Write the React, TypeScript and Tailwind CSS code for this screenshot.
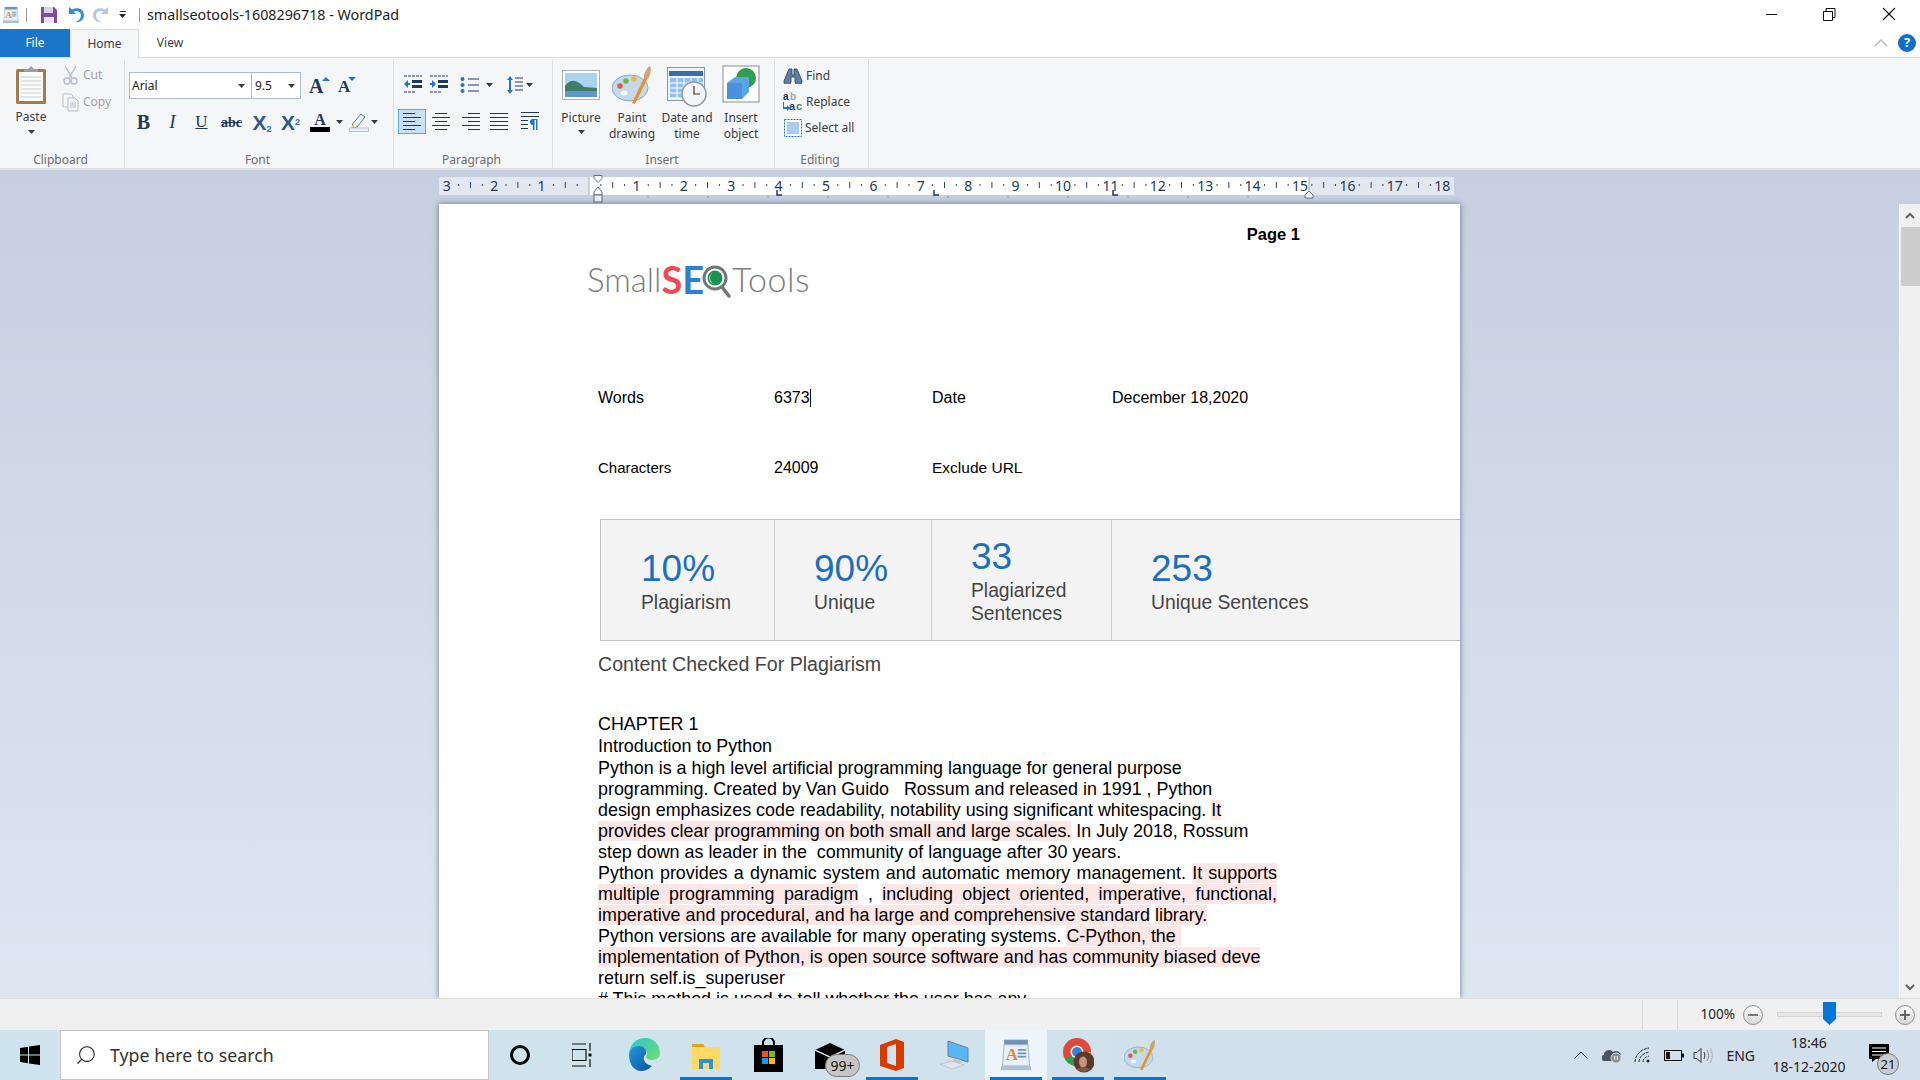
import React from 'react';
import { Search } from 'lucide-react';

const UI = "font-['Noto_Sans',sans-serif]";
const DOC = "font-['Liberation_Sans',Arial,sans-serif]";

const Arrow = ({ color = '#3b3b3b' }: { color?: string }) => (
  <svg width="7" height="4" viewBox="0 0 7 4" className="shrink-0"><path d="M0 0h7L3.5 4z" fill={color} /></svg>
);

const WordPadIcon = ({ size = 20 }: { size?: number }) => (
  <svg width={size} height={size} viewBox="0 0 20 20">
    <path d="M3 1h14v3H3z" fill="#6f94b8" />
    <path d="M3 4h14l1 13H2z" fill="#e8f1f9" stroke="#9db7d0" strokeWidth=".6" />
    <path d="M1.5 16h17l.5 3H1z" fill="#a9c2da" />
    <text x="4" y="13" fontSize="10" fontWeight="700" fill="#e8842c" fontFamily="Liberation Serif">A</text>
    <path d="M11 7h5M11 9h5M11 11h5" stroke="#6f94b8" strokeWidth="1" />
  </svg>
);

const PaintIcon = ({ size = 40 }: { size?: number }) => (
  <svg width={size} height={size} viewBox="0 0 40 40">
    <ellipse cx="18" cy="23" rx="18" ry="13" fill="#c3d9ec" stroke="#8aa9c6" strokeWidth="1" />
    <ellipse cx="12" cy="28" rx="3.5" ry="2.5" fill="#f4f8fc" />
    <circle cx="8" cy="21" r="2.8" fill="#e0594a" />
    <circle cx="14" cy="16" r="2.8" fill="#6fb54a" />
    <circle cx="22" cy="14" r="2.8" fill="#f0b93a" />
    <path d="M20 38 33 11l3 1.5L23 39z" fill="#e8902c" />
    <path d="M32 12c0-5 3-9 6-11 2 3 0 10-2 13z" fill="#c9a77c" />
  </svg>
);

const ChromeIcon = () => (
  <svg width="32" height="36" viewBox="0 0 32 36">
    <circle cx="15" cy="15" r="14" fill="#dd4a3c" />
    <path d="M15 15 3 22a14 14 0 0 0 16 6.5z" fill="#2f9e4f" />
    <path d="M15 15h13.5a14 14 0 0 1-9.5 13.5z" fill="#f6c02c" />
    <circle cx="15" cy="15" r="6.5" fill="#fff" />
    <circle cx="15" cy="15" r="5" fill="#3b7de4" />
    <circle cx="22" cy="25" r="10.5" fill="#5a3a2c" />
    <ellipse cx="21" cy="25" rx="4" ry="5.5" fill="#c79579" />
    <path d="M15 33c2-4 10-4 13 0l-6 2z" fill="#7c5a48" />
  </svg>
);

function TitleBar() {
  return (
    <div className="h-[29px] bg-white flex items-center shrink-0">
      <div className="w-[2px]" />
      <WordPadIcon size={18} />
      <div className="ml-[6px] w-px h-[14px] bg-[#9a9a9a]" />
      <svg width="16" height="16" viewBox="0 0 16 16" className="ml-[14px]">
        <path d="M0 0h13l3 3v13H0z" fill="#7b4f9e" />
        <path d="M3 0h9v6H3z" fill="#d9d3e6" />
        <path d="M3 10h10v6H3z" fill="#e9e6f0" />
      </svg>
      <svg width="16" height="18" viewBox="0 0 16 18" className="ml-[11px]">
        <path d="M1 1v7h7L5.6 5.6C8.5 4 13 5.500 13 9.500c0 3-2 5-5 6.500 5 .5 8-3 8-7 0-6.500-7-8.500-12-5.500z" fill="#2a8fdc" />
      </svg>
      <svg width="16" height="18" viewBox="0 0 16 18" className="ml-[9px] -scale-x-100">
        <path d="M1 1v7h7L5.6 5.6C8.5 4 13 5.500 13 9.500c0 3-2 5-5 6.500 5 .5 8-3 8-7 0-6.500-7-8.500-12-5.500z" fill="#b6c8da" />
      </svg>
      <div className="ml-[10px] flex flex-col items-center gap-[2px]">
        <div className="w-[6px] h-px bg-[#333]" />
        <Arrow color="#222" />
      </div>
      <div className="ml-[13px] w-px h-[14px] bg-[#9a9a9a]" />
      <span className={`ml-[7px] text-[14.3px] text-[#222] ${UI}`}>smallseotools-1608296718 - WordPad</span>
      <div className="flex-1" />
      <svg width="150" height="29" viewBox="0 0 150 29" className="mr-[4px]">
        <path d="M0 14.500h11" stroke="#111" />
        <path d="M57.500 11.500h9v9h-9zM60 11V8.500h9v9h-2.500" fill="none" stroke="#111" />
        <path d="M117 8l12 12M129 8l-12 12" stroke="#111" strokeWidth="1.100" />
      </svg>
    </div>
  );
}

function Tabs() {
  return (
    <div className={`h-[29px] flex bg-white border-b border-[#dadbdc] shrink-0 text-[12px] ${UI}`}>
      <div className="w-[70px] h-[28px] bg-[#1a76c8] text-white flex items-center justify-center">File</div>
      <div className="w-[69px] h-[29px] bg-[#f5f6f7] border border-b-0 border-[#dadbdc] text-[#3b3b44] flex items-center justify-center">Home</div>
      <div className="w-[62px] h-[28px] text-[#3b3b44] flex items-center justify-center">View</div>
      <div className="flex-1" />
      <svg width="14" height="8" viewBox="0 0 14 8" className="self-center mr-[10px]"><path d="M1 7l6-6 6 6" fill="none" stroke="#b5b5b5" strokeWidth="1.300" /></svg>
      <div className="w-[18px] h-[18px] rounded-full bg-[#0f6fc6] text-white text-[13px] font-bold flex items-center justify-center self-center mr-[4px]">?</div>
    </div>
  );
}

const Group = ({ label, w, children }: { label: string; w: string; children: React.ReactNode }) => (
  <div className={`${w} h-[108px] mt-[2px] border-r border-[#dcdfe3] flex flex-col shrink-0`}>
    <div className="h-[91px]">{children}</div>
    <div className={`h-[17px] pr-[3px] text-[12px] leading-[17px] text-[#6b6b73] text-center ${UI}`}>{label}</div>
  </div>
);

const Lines = ({ kind }: { kind: 'left' | 'center' | 'right' | 'full' }) => {
  const rows = [
    { full: [0, 18], left: [0, 12], center: [3, 15], right: [6, 18] },
    { full: [0, 18], left: [0, 18], center: [0, 18], right: [0, 18] },
    { full: [0, 18], left: [0, 12], center: [3, 15], right: [6, 18] },
    { full: [0, 18], left: [0, 18], center: [0, 18], right: [0, 18] },
    { full: [0, 18], left: [0, 12], center: [3, 15], right: [6, 18] },
  ];
  return (
    <svg width="18" height="17" viewBox="0 0 18 17">
      {rows.map((r, i) => (
        <path key={i} d={`M${r[kind][0]} ${i * 4 + 0.5}H${r[kind][1]}`} stroke="#1e395b" />
      ))}
    </svg>
  );
};

const Indent = ({ flip }: { flip?: boolean }) => (
  <svg width="18" height="19" viewBox="0 0 18 19">
    <path d="M0 1h18M0 17h12" stroke="#1e395b" strokeDasharray="3 1" />
    <path d="M8 5h10v3H8zM8 10h10v3H8z" fill="#1e395b" />
    {flip ? <path d="M0 8h2V5l4 4-4 4v-3H0z" fill="#1c75d2" /> : <path d="M6 8H4V5L0 9l4 4v-3h2z" fill="#1c75d2" />}
  </svg>
);

function Ribbon() {
  return (
    <div className="h-[112px] bg-[#f5f6f7] border-b-2 border-[#dfe1e5] flex shrink-0">
      <Group label="Clipboard" w="w-[125px]">
        <div className={`flex text-[12px] ${UI}`}>
          <div className="w-[62px] pt-[6px] flex flex-col items-center">
            <svg width="32" height="38" viewBox="0 0 32 38">
              <rect x="1" y="3" width="30" height="35" rx="1.500" fill="#a67a4b" />
              <rect x="4" y="6" width="24" height="29" fill="#fbfbf8" />
              <path d="M6 11h20M6 15h20M6 19h20M6 23h20M6 27h20M6 31h20" stroke="#c5cedb" />
              <path d="M9 6V3h4l3-3 3 3h4v3z" fill="#9aa0a6" />
            </svg>
            <div className="mt-[5px] leading-[16px] text-[#3b3b44]">Paste</div>
            <div className="mt-[5px]"><Arrow /></div>
          </div>
          <div className="pt-[5px] flex flex-col gap-[7px] text-[#a2a2a6]">
            <div className="h-[20px] flex items-center gap-[4px]">
              <svg width="17" height="20" viewBox="0 0 17 20" fill="none" stroke="#b3bdc9" strokeWidth="1.400">
                <path d="M3 1l7 12M14 1L7 13" />
                <circle cx="5" cy="16" r="3" />
                <circle cx="12" cy="16" r="3" />
              </svg>
              <span>Cut</span>
            </div>
            <div className="h-[20px] flex items-center gap-[4px]">
              <svg width="17" height="19" viewBox="0 0 17 19" fill="#f6f8fa" stroke="#b3bdc9">
                <path d="M1 1h8l2 2v11H1z" />
                <path d="M6 5h7l3 3v10H6z" />
                <path d="M8 10h6M8 12h6M8 14h6" />
              </svg>
              <span>Copy</span>
            </div>
          </div>
        </div>
      </Group>
      <Group label="Font" w="w-[269px]">
        <div className="pl-[4px] pt-[12px]">
          <div className="flex items-center">
            <div className={`w-[123px] h-[27px] bg-white border border-[#a9bbd4] flex items-center justify-between pl-[2px] pr-[6px] text-[12px] text-[#222] ${UI}`}>
              Arial <Arrow />
            </div>
            <div className={`w-[49px] h-[27px] bg-white border border-l-0 border-[#a9bbd4] flex items-center justify-between pl-[3px] pr-[5px] text-[12px] text-[#222] ${UI}`}>
              9.5 <Arrow />
            </div>
            <div className="ml-[8px] w-[21px] h-[20px] relative font-['Liberation_Serif',serif] font-bold text-[#1e395b] text-[20px] leading-[20px]">
              A
              <svg width="8" height="4" viewBox="0 0 8 4" className="absolute right-0 top-[1px]"><path d="M4 0l4 4H0z" fill="#1c75d2" /></svg>
            </div>
            <div className="ml-[8px] w-[18px] h-[20px] relative font-['Liberation_Serif',serif] font-bold text-[#1e395b] text-[17px] leading-[22px]">
              A
              <svg width="8" height="4" viewBox="0 0 8 4" className="absolute right-0 top-[1px]"><path d="M0 0h8L4 4z" fill="#1c75d2" /></svg>
            </div>
          </div>
          <div className="mt-[11px] h-[24px] flex items-center text-[#1e395b] font-['Liberation_Serif',serif]">
            <div className="w-[29px] text-center text-[20px] font-bold">B</div>
            <div className="w-[29px] text-center text-[19px] italic">I</div>
            <div className="w-[29px] text-center text-[17px] underline">U</div>
            <div className="w-[31px] text-center text-[14px] font-bold line-through">abc</div>
            <div className="w-[30px] text-center text-[#2e5b8c] font-bold text-[21px] font-['Liberation_Sans',sans-serif] leading-none">
              X<sub className="text-[9px] text-[#1c75d2]">2</sub>
            </div>
            <div className="w-[27px] text-center text-[#2e5b8c] font-bold text-[21px] font-['Liberation_Sans',sans-serif] leading-none">
              X<sup className="text-[9px] text-[#1c75d2]">2</sup>
            </div>
            <div className="ml-[5px] w-[22px] flex flex-col items-center text-[16px] font-bold leading-[15px]">
              A
              <div className="w-[20px] h-[5px] bg-black" />
            </div>
            <div className="ml-[5px]"><Arrow /></div>
            <svg width="20" height="20" viewBox="0 0 20 20" className="ml-[6px]">
              <path d="M3.500 12 12 2l4 3-8 10-4 1z" fill="#eef2f7" stroke="#5b7a9c" />
              <path d="M3 13l3 2-4 1z" fill="#f2c14e" />
              <rect x=".5" y="16" width="19" height="3.500" fill="#eef1f4" stroke="#b7c3d2" />
            </svg>
            <div className="ml-[2px]"><Arrow /></div>
          </div>
        </div>
      </Group>
      <Group label="Paragraph" w="w-[159px]">
        <div className="pl-[4px] pt-px">
          <div className="pl-[6px] h-[47px] flex items-center">
            <Indent />
            <div className="ml-[8px]"><Indent flip /></div>
            <svg width="19" height="16" viewBox="0 0 19 16" className="ml-[12px]">
              <circle cx="2.500" cy="2" r="2" fill="#1c75d2" /><circle cx="2.500" cy="8" r="2" fill="#1c75d2" /><circle cx="2.500" cy="14" r="2" fill="#1c75d2" />
              <path d="M8 2h11M8 8h11M8 14h11" stroke="#1e395b" />
            </svg>
            <div className="ml-[7px]"><Arrow /></div>
            <svg width="16" height="20" viewBox="0 0 16 20" className="ml-[14px]">
              <path d="M3 1l3 4H4v10h2l-3 4-3-4h2V5H0z" fill="#1c75d2" />
              <path d="M8 3h8M8 7h8M8 11h8M8 15h8" stroke="#1e395b" />
            </svg>
            <div className="ml-[3px]"><Arrow /></div>
          </div>
          <div className="flex items-center h-[26px]">
            <div className="w-[28px] h-[25px] bg-[#c9e0f7] border border-[#62a4e6] flex items-center justify-center"><Lines kind="left" /></div>
            <div className="ml-[6px]"><Lines kind="center" /></div>
            <div className="ml-[12px]"><Lines kind="right" /></div>
            <div className="ml-[10px]"><Lines kind="full" /></div>
            <svg width="20" height="18" viewBox="0 0 20 18" className="ml-[12px]">
              <path d="M1 .5h18M1 4.500h18M1 8.500h7M1 12.500h7M1 16.500h7" stroke="#1e395b" />
              <path d="M13 7a3 3 0 0 0 0 6v5h1.500V8H16v10h1.500V7z" fill="#1c75d2" />
            </svg>
          </div>
        </div>
      </Group>
      <Group label="Insert" w="w-[222px]">
        <div className={`pl-[2px] pt-px flex text-[12px] leading-[16px] text-[#3b3b44] text-center ${UI}`}>
          <div className="w-[52px] flex flex-col items-center">
            <div className="h-[49px] pt-[9px]">
              <svg width="38" height="30" viewBox="0 0 38 30">
                <rect x=".5" y=".5" width="37" height="29" fill="#fff" stroke="#aab0b8" />
                <rect x="3" y="3" width="32" height="24" fill="#a9d4ee" />
                <path d="M3 16c6-8 12-6 19 1l13 1v9H3z" fill="#3f7c6a" />
                <rect x="3" y="21" width="32" height="6" fill="#5c98c8" />
              </svg>
            </div>
            Picture
            <div className="mt-[4px]"><Arrow /></div>
          </div>
          <div className="w-[50px] flex flex-col items-center">
            <div className="h-[49px] pt-[4px]"><PaintIcon /></div>
            Paint<br />drawing
          </div>
          <div className="w-[60px] flex flex-col items-center">
            <div className="h-[49px] pt-[6px]">
              <svg width="40" height="40" viewBox="0 0 40 40">
                <rect x=".5" y=".5" width="37" height="33" fill="#eef3f9" stroke="#8d97a3" />
                <rect x="2" y="4" width="34" height="5" fill="#3a6ea8" />
                <path d="M3 11h33v19H3z" fill="#8fc0ef" />
                <path d="M3 16h33M3 21h33M3 26h33M10 11v19M17 11v19M24 11v19M31 11v19" stroke="#fff" />
                <circle cx="27" cy="27" r="12" fill="#f4f5f6" stroke="#8d97a3" strokeWidth="1.500" />
                <path d="M27 19v8h6" fill="none" stroke="#333" strokeWidth="1.200" />
              </svg>
            </div>
            Date and<br />time
          </div>
          <div className="w-[48px] flex flex-col items-center">
            <div className="h-[49px] pt-[4px]">
              <svg width="38" height="38" viewBox="0 0 38 38">
                <rect x="1" y="1" width="36" height="36" fill="#fff" stroke="#8c8c8c" />
                <circle cx="24" cy="13" r="10" fill="#2f9e4f" />
                <path d="M5 18l8-6h14v15l-7 7H5z" fill="#5aa5ea" />
                <path d="M5 18h15v16H5z" fill="#4a90dc" />
              </svg>
            </div>
            Insert<br />object
          </div>
        </div>
      </Group>
      <Group label="Editing" w="w-[94px]">
        <div className={`pt-[5px] pl-[8px] flex flex-col gap-[4px] text-[12px] text-[#3b3b44] ${UI}`}>
          <div className="h-[22px] flex items-center gap-[3px]">
            <svg width="20" height="16" viewBox="0 0 20 16">
              <path d="M6 1h3v6h2V1h3l5 12a3 3 0 0 1-7 1V9H8v5a3 3 0 0 1-7-1z" fill="#5f7ea3" stroke="#24405f" strokeWidth=".8" />
            </svg>
            Find
          </div>
          <div className="h-[22px] flex items-center gap-[2px]">
            <svg width="21" height="20" viewBox="0 0 21 20" className="font-['Liberation_Sans',sans-serif] font-bold">
              <text x="0" y="8" fontSize="10" fill="#1e395b">a</text>
              <text x="7" y="8" fontSize="10" fill="#9aa5b1">b</text>
              <text x="6" y="18" fontSize="11" fill="#1e395b">a</text>
              <text x="13" y="18" fontSize="11" fill="#2f8a3c">c</text>
              <path d="M1 10v5h3v-2l3 3-3 3v-2H0v-7z" fill="#1c75d2" />
            </svg>
            Replace
          </div>
          <div className="h-[22px] flex items-center gap-[3px]">
            <svg width="18" height="18" viewBox="0 0 18 18" className="ml-[1px]">
              <rect x=".5" y=".5" width="17" height="17" fill="#fff" stroke="#1c75d2" strokeDasharray="2 1" />
              <rect x="3" y="3" width="12" height="12" fill="#a9cdf2" />
            </svg>
            Select all
          </div>
        </div>
      </Group>
    </div>
  );
}

function Ruler() {
  const pos = (n: number) => 150 + n * 47.4;
  const marks: number[] = [];
  for (let i = -3; i < 19; i += 0.25) marks.push(i);
  const stops = [0, 1, 2, 3, 4, 5, 6, 7, 8, 9, 10];
  return (
    <svg width="1030" height="34" viewBox="0 0 1030 34" className="block shrink-0">
      <rect x="0" y="7" width="150" height="18" fill="#e3e7ef" />
      <rect x="150" y="7" width="720" height="18" fill="#fff" />
      <rect x="870" y="7" width="145" height="18" fill="#e3e7ef" />
      <path d="M150 7v18M870 7v18" stroke="#a4afc2" />
      {marks.filter((m) => m * 47.4 + 150 > 2 && m * 47.4 + 150 < 1012 && m % 1 !== 0).map((m) => (
        <path key={m} d={m % 0.5 === 0 ? `M${pos(m)} 12v6` : `M${pos(m)} 14v2`} stroke="#28456b" />
      ))}
      {stops.map((s) => <path key={s} d={`M${209 + s * 60} 26v2`} stroke="#8a96ad" />)}
      {[338, 495, 674].map((x) => <path key={x} d={`M${x} 20v5h5`} fill="none" stroke="#1e395b" strokeWidth="1.500" />)}
      {[-3, -2, -1, 1, 2, 3, 4, 5, 6, 7, 8, 9, 10, 11, 12, 13, 14, 15, 16, 17, 18].map((n) => (
        <text key={n} x={pos(n)} y="20.500" textAnchor="middle" fontSize="14" fill="#1e395b" fontFamily="Noto Sans, sans-serif">{Math.abs(n)}</text>
      ))}
      <path d="M155 5.500h8v3l-4 4-4-4z" fill="#fff" stroke="#5c6f8c" />
      <path d="M155 25v-3l4-5 4 5v3z" fill="#fff" stroke="#5c6f8c" />
      <rect x="155" y="25" width="8" height="7" fill="#f2f4f7" stroke="#5c6f8c" />
      <path d="M866 28v-3l4-4 4 4v3z" fill="#fff" stroke="#5c6f8c" />
    </svg>
  );
}

type Seg = { t: string; hl?: boolean };
const body: { segs: Seg[]; justify?: boolean }[] = [
  { segs: [{ t: 'Python is a high level artificial programming language for general purpose' }] },
  { segs: [{ t: 'programming. Created by Van Guido   Rossum and released in 1991 , Python' }] },
  { segs: [{ t: 'design emphasizes code readability, notability using significant whitespacing. ' }, { t: 'It', hl: true }] },
  { segs: [{ t: 'provides clear programming on both small and large scales.', hl: true }, { t: ' In July 2018, Rossum' }] },
  { segs: [{ t: 'step down as leader in the  community of language after 30 years.' }] },
  { segs: [{ t: 'Python provides a dynamic system and automatic memory management. ' }, { t: 'It supports', hl: true }], justify: true },
  { segs: [{ t: 'multiple programming paradigm', hl: true }, { t: ' , ' }, { t: 'including object oriented, imperative, functional,', hl: true }], justify: true },
  { segs: [{ t: 'imperative and procedural, and ha large and comprehensive standard', hl: true }, { t: ' ' }, { t: 'library.', hl: true }] },
  { segs: [{ t: 'Python versions are available for many operating systems. ' }, { t: 'C-Python, the ', hl: true }] },
  { segs: [{ t: 'implementation of Python, is open source', hl: true }, { t: ' ' }, { t: 'software and has community biased deve', hl: true }] },
  { segs: [{ t: 'return self.is_superuser' }] },
  { segs: [{ t: '# This method is used to tell whether the user has any' }] },
];

const stats = [
  { value: '10%', label: ['Plagiarism'], pl: 'pl-[40px]' },
  { value: '90%', label: ['Unique'], pl: 'pl-[39px]' },
  { value: '33', label: ['Plagiarized', 'Sentences'], pl: 'pl-[39px]' },
  { value: '253', label: ['Unique Sentences'], pl: 'pl-[39px]' },
];

function Page() {
  return (
    <div className={`flex-1 w-[1021px] bg-white overflow-hidden shadow-[0_0_6px_rgba(60,80,120,0.7)] pt-[21px] pl-[159px] text-black text-[16px] ${DOC}`}>
      <div className="h-[18px] leading-[18px] text-[16.5px] font-bold text-right pr-[160px]">Page 1</div>
      <div className="mt-[15px] -ml-[11px] h-[42px] flex items-center text-[33px] text-[#7d7d7d] font-['Lato',sans-serif] font-light leading-none">
        <span>Small</span>
        <span className="text-[38px] font-bold text-[#ef4b4f]">S</span>
        <span className="text-[38px] font-bold text-[#2f7fd0]">E</span>
        <svg width="31" height="34" viewBox="0 0 31 34" className="-ml-[3px] mt-[5px]">
          <circle cx="14" cy="13" r="11" fill="#fff" stroke="#757575" strokeWidth="3" />
          <circle cx="14" cy="13" r="7.500" fill="#16934e" />
          <path d="M12 7a7 7 0 0 0 1 12c-5-1-7-8-1-12z" fill="#dff1e6" />
          <path d="M21 22l7 9" stroke="#757575" strokeWidth="3.500" strokeLinecap="round" />
        </svg>
        <span className="tracking-[0.5px] text-[34px]">Tools</span>
      </div>
      <div className="mt-[89px] grid grid-cols-[176px_158px_180px_1fr] h-[18px] leading-[18px]">
        <div>Words</div>
        <div className="flex items-center"><span>6373</span><span className="w-px h-[18px] bg-black" /></div>
        <div>Date</div>
        <div>December 18,2020</div>
      </div>
      <div className="mt-[52px] grid grid-cols-[176px_158px_180px_1fr] h-[18px] leading-[18px]">
        <div className="text-[15px]">Characters</div>
        <div>24009</div>
        <div className="text-[15.500px]">Exclude URL</div>
      </div>
      <div className="mt-[42px] ml-[2px] h-[122px] bg-[#f4f4f4] border-y border-l border-[#bdbdbd] grid grid-cols-[174px_157px_180px_1fr]">
        {stats.map((s, i) => (
          <div key={s.value} className={`${s.pl} flex flex-col justify-center ${i < 3 ? 'border-r border-[#cccccc]' : ''}`}>
            <div className="text-[37px] leading-[44px] text-[#1b6fc2]">{s.value}</div>
            {s.label.map((l) => <div key={l} className="text-[19.300px] leading-[23px] text-[#444]">{l}</div>)}
          </div>
        ))}
      </div>
      <div className="mt-[11px] text-[19.600px] leading-[24px] text-[#444]">Content Checked For Plagiarism</div>
      <div className="mt-[37px] text-[17.900px] leading-[22px]">CHAPTER 1</div>
      <div className="text-[17.900px] leading-[22px]">Introduction to Python</div>
      <div className="mt-px w-[679px] text-[17.900px]">
        {body.map((line, i) => (
          <div key={i} className={`h-[21px] leading-[21px] ${line.justify ? 'whitespace-pre-wrap text-justify [text-align-last:justify]' : 'whitespace-pre'}`}>
            {line.segs.map((s, j) => (
              <span key={j} className={s.hl ? 'bg-[#fde6e6]' : ''}>{s.t}</span>
            ))}
          </div>
        ))}
      </div>
    </div>
  );
}

function Scrollbar() {
  return (
    <div className="w-[21px] mt-[34px] bg-[#f0f0f0] border-l border-white flex flex-col items-center shrink-0">
      <svg width="12" height="23" viewBox="0 0 12 23" className="shrink-0"><path d="M2 14l4-4 4 4" fill="none" stroke="#606060" strokeWidth="2" /></svg>
      <div className="w-[19px] h-[59px] bg-[#cdcdcd]" />
      <div className="flex-1" />
      <svg width="12" height="20" viewBox="0 0 12 20" className="shrink-0"><path d="M2 7l4 4 4-4" fill="none" stroke="#606060" strokeWidth="2" /></svg>
    </div>
  );
}

function StatusBar() {
  return (
    <div className={`h-[32px] bg-[#f0f0f0] border-t border-[#dcdcdc] flex items-center shrink-0 ${UI}`}>
      <div className="flex-1" />
      <div className="w-px h-[30px] bg-[#dadada]" />
      <div className="ml-[34px] w-px h-[30px] bg-[#dadada]" />
      <span className="ml-[23px] text-[13.500px] text-[#222]">100%</span>
      <div className="ml-[8px] w-[20px] h-[20px] rounded-full border border-[#8f8f8f] bg-gradient-to-b from-white to-[#d8d8d8] flex items-center justify-center">
        <div className="w-[10px] h-[2px] bg-[#777]" />
      </div>
      <div className="ml-[14px] w-[105px] h-[5px] bg-[#e6e6e6] border border-[#d4d4d4] relative">
        <svg width="13" height="23" viewBox="0 0 13 23" className="absolute left-[45px] -top-[11px]"><path d="M0 0h13v17l-6.500 6L0 17z" fill="#0078d7" /></svg>
      </div>
      <div className="ml-[13px] w-[20px] h-[20px] rounded-full border border-[#8f8f8f] bg-gradient-to-b from-white to-[#d8d8d8] flex items-center justify-center relative">
        <div className="w-[10px] h-[2px] bg-[#666]" />
        <div className="absolute w-[2px] h-[10px] bg-[#666]" />
      </div>
      <div className="w-[5px]" />
    </div>
  );
}

const TaskIcon = ({ on, active, children }: { on?: boolean; active?: boolean; children: React.ReactNode }) => (
  <div className={`w-[62px] h-[50px] shrink-0 flex items-center justify-center relative ${active ? 'bg-[#edf4fa]' : ''}`}>
    {children}
    {on && <div className="absolute bottom-0 left-[5px] right-[5px] h-[3px] bg-[#0078d7]" />}
  </div>
);

function Taskbar() {
  return (
    <div className="h-[50px] bg-gradient-to-r from-[#cfe5ee] via-[#d0e2ec] to-[#d3dfed] flex items-center shrink-0">
      <div className="w-[60px] flex justify-center">
        <svg width="20" height="20" viewBox="0 0 20 20"><path d="M0 3l8-1.200V9.500H0zM9 1.600 20 0v9.500H9zM0 10.500h8v7.700L0 17zM9 10.500h11V20L9 18.400z" fill="#000" /></svg>
      </div>
      <div className={`w-[429px] h-[50px] bg-white border border-[#c4c4c4] flex items-center pl-[14px] text-[17.800px] text-[#333] ${UI}`}>
        <Search size={22} strokeWidth={1.200} className="-scale-x-100 text-[#222]" />
        <span className="ml-[13px]">Type here to search</span>
      </div>
      <TaskIcon><div className="w-[20px] h-[20px] rounded-full border-[3px] border-black" /></TaskIcon>
      <TaskIcon>
        <svg width="20" height="26" viewBox="0 0 20 26" fill="none" stroke="#111" strokeWidth="1.200">
          <path d="M0 2h14M0 7.500h14v11H0zM0 24h14M18 1v8M18 17v8" />
          <rect x="16.500" y="11.500" width="3" height="3" fill="#111" stroke="none" />
        </svg>
      </TaskIcon>
      <TaskIcon>
        <svg width="32" height="34" viewBox="0 0 32 34">
          <defs>
            <linearGradient id="edgeA" x1="0" y1="0" x2="1" y2="1"><stop offset="0" stopColor="#2bc3d6" /><stop offset="1" stopColor="#6fe06a" /></linearGradient>
            <linearGradient id="edgeB" x1="0" y1="0" x2="1" y2="1"><stop offset="0" stopColor="#1f9ade" /><stop offset="1" stopColor="#0c4f9e" /></linearGradient>
          </defs>
          <path d="M1 17C1 7 8 0 17 0c9 0 15 7 15 15 0 5-4 7-8 7-3 0-6-1-6-3 0-1 1-2 1-3 0-4-4-6-7-6-6 0-11 3-11 7z" fill="url(#edgeA)" />
          <path d="M1 17c0-6 6-9 10-9 4 0 8 3 7 8-4 3-3 10 6 12-3 3-7 5-11 5C6 33 1 26 1 17z" fill="url(#edgeB)" />
        </svg>
      </TaskIcon>
      <TaskIcon on>
        <svg width="28" height="28" viewBox="0 0 28 28">
          <path d="M0 3h11l2 3h15v22H0z" fill="#ffd966" />
          <path d="M0 3h11l2 3H0z" fill="#e0a321" />
          <path d="M7 28V18h14v10h-4v-6h-6v6z" fill="#2f8fdc" />
        </svg>
      </TaskIcon>
      <TaskIcon>
        <svg width="29" height="34" viewBox="0 0 29 34">
          <path d="M9 8V5a5 5 0 0 1 11 0v3" fill="none" stroke="#000" strokeWidth="2" />
          <rect y="7" width="29" height="27" fill="#000" />
          <rect x="8" y="13" width="6" height="6" fill="#f25022" /><rect x="15" y="13" width="6" height="6" fill="#7fba00" />
          <rect x="8" y="20" width="6" height="6" fill="#00a4ef" /><rect x="15" y="20" width="6" height="6" fill="#ffb900" />
        </svg>
      </TaskIcon>
      <TaskIcon>
        <div className="relative w-[30px] h-[28px]">
          <svg width="30" height="28" viewBox="0 0 30 28"><path d="M0 9 15 2l15 7v19H0z" fill="#000" /><path d="M0 9l15 7 15-7" fill="none" stroke="#fff" strokeWidth="1.300" /></svg>
          <div className="absolute left-[10px] top-[13px] w-[35px] h-[23px] rounded-full bg-[#c5c5c5] border border-[#777] flex items-center justify-center text-[14px] text-[#111] font-['Noto_Sans',sans-serif] leading-none">99+</div>
        </div>
      </TaskIcon>
      <TaskIcon on>
        <svg width="24" height="32" viewBox="0 0 24 32"><path d="M0 6 16 0l8 3v26l-8 3-16-5zM7 8v16l9 3V5z" fill="#d83b01" /></svg>
      </TaskIcon>
      <TaskIcon>
        <svg width="30" height="32" viewBox="0 0 30 32">
          <path d="M9 2l20 7v14L9 17z" fill="#5ab5f4" stroke="#6d7f92" />
          <path d="M14 19l8 2v3h-8z" fill="#c2cbd4" />
          <path d="M1 25l12-3 12 4-12 4z" fill="#dfe5ea" stroke="#a8b3bd" strokeWidth=".6" />
        </svg>
      </TaskIcon>
      <TaskIcon on active><WordPadIcon size={34} /></TaskIcon>
      <TaskIcon on><ChromeIcon /></TaskIcon>
      <TaskIcon on><PaintIcon size={32} /></TaskIcon>
      <div className="flex-1" />
      <div className={`flex items-center text-[#222] ${UI}`}>
        <svg width="14" height="8" viewBox="0 0 14 8" className="mr-[14px]"><path d="M.5 7.500l6.500-6.500 6.500 6.500" fill="none" stroke="#111" /></svg>
        <svg width="20" height="17" viewBox="0 0 20 17" className="mr-[12px]">
          <path d="M3 14a3 3 0 0 1-1-6 5 5 0 0 1 9-3 5 5 0 0 1 8 4c0 3-3 5-6 5z" fill="#4a5360" />
          <circle cx="14" cy="11" r="5" fill="#8b8b8b" stroke="#d5e0ec" />
          <path d="M12.700 9v4M15.300 9v4" stroke="#fff" />
        </svg>
        <svg width="16" height="16" viewBox="0 0 16 16" fill="none" stroke="#222" className="mr-[14px]">
          <path d="M1 15C1 8 7 2 15 1M5 15c0-5 4-9 10-10M9 15c0-3 2-5 6-6" strokeDasharray="3 1" />
          <circle cx="14" cy="14" r="1.500" fill="#222" stroke="none" />
        </svg>
        <svg width="20" height="11" viewBox="0 0 20 11" className="mr-[9px]">
          <rect x=".5" y=".5" width="17" height="10" fill="none" stroke="#111" />
          <rect x="2" y="2" width="4" height="7" fill="#111" /><rect x="18" y="3.500" width="2" height="4" fill="#111" />
        </svg>
        <svg width="20" height="17" viewBox="0 0 20 17" fill="none" stroke="#333" className="mr-[13px]">
          <path d="M1 5.500h3L8 1.500v14l-4-4H1z" />
          <path d="M11 5c1 2 1 5 0 7" /><path d="M14 3c2 3 2 8 0 11" stroke="#888" /><path d="M17 1c3 4 3 11 0 15" stroke="#aaa" />
        </svg>
        <span className="text-[14px] mr-[16px]">ENG</span>
        <div className="w-[76px] flex flex-col items-center text-[14px] leading-[24px] whitespace-nowrap">
          <div>18:46</div>
          <div>18-12-2020</div>
        </div>
        <div className="ml-[22px] mr-[31px] relative w-[20px] h-[18px] -mt-[4px]">
          <svg width="20" height="18" viewBox="0 0 20 18"><path d="M0 0h20v15H7l-4 3v-3H0z" fill="#000" /><path d="M3 4h14M3 7.500h14M3 11h14" stroke="#fff" /></svg>
          <div className="absolute left-[8px] top-[9px] w-[22px] h-[22px] rounded-full bg-[#c9ced6] border border-[#777] flex items-center justify-center text-[13px] leading-none text-[#111]">21</div>
        </div>
      </div>
    </div>
  );
}

export default function App() {
  return (
    <div className="w-[1920px] h-[1080px] flex flex-col overflow-hidden bg-white">
      <TitleBar />
      <Tabs />
      <Ribbon />
      <div className="flex-1 min-h-0 flex bg-gradient-to-b from-[#c5cfe0] to-[#dde7f2]">
        <div className="flex-1 min-w-0 pl-[439px] flex flex-col">
          <Ruler />
          <Page />
        </div>
        <Scrollbar />
      </div>
      <StatusBar />
      <Taskbar />
    </div>
  );
}
